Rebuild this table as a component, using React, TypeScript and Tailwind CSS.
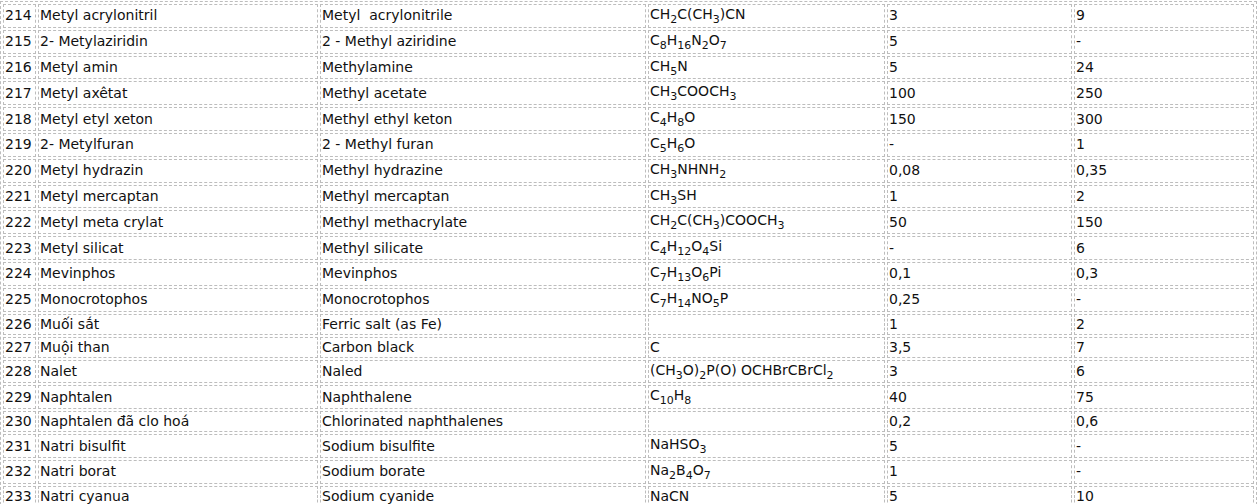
const rows: [string, string, string, string, string, string][] = [
  ['214', 'Metyl acrylonitril', 'Metyl\u00a0 acrylonitrile', 'CH2C(CH3)CN', '3', '9'],
  ['215', '2- Metylaziridin', '2 - Methyl aziridine', 'C8H16N2O7', '5', '-'],
  ['216', 'Metyl amin', 'Methylamine', 'CH5N', '5', '24'],
  ['217', 'Metyl axêtat', 'Methyl acetate', 'CH3COOCH3', '100', '250'],
  ['218', 'Metyl etyl xeton', 'Methyl ethyl keton', 'C4H8O', '150', '300'],
  ['219', '2- Metylfuran', '2 - Methyl furan', 'C5H6O', '-', '1'],
  ['220', 'Metyl hydrazin', 'Methyl hydrazine', 'CH3NHNH2', '0,08', '0,35'],
  ['221', 'Metyl mercaptan', 'Methyl mercaptan', 'CH3SH', '1', '2'],
  ['222', 'Metyl meta crylat', 'Methyl methacrylate', 'CH2C(CH3)COOCH3', '50', '150'],
  ['223', 'Metyl silicat', 'Methyl silicate', 'C4H12O4Si', '-', '6'],
  ['224', 'Mevinphos', 'Mevinphos', 'C7H13O6Pi', '0,1', '0,3'],
  ['225', 'Monocrotophos', 'Monocrotophos', 'C7H14NO5P', '0,25', '-'],
  ['226', 'Muối sắt', 'Ferric salt (as Fe)', '', '1', '2'],
  ['227', 'Muội than', 'Carbon black', 'C', '3,5', '7'],
  ['228', 'Nalet', 'Naled', '(CH3O)2P(O) OCHBrCBrCl2', '3', '6'],
  ['229', 'Naphtalen', 'Naphthalene', 'C10H8', '40', '75'],
  ['230', 'Naphtalen đã clo hoá', 'Chlorinated naphthalenes', '', '0,2', '0,6'],
  ['231', 'Natri bisulfit', 'Sodium bisulfite', 'NaHSO3', '5', '-'],
  ['232', 'Natri borat', 'Sodium borate', 'Na2B4O7', '1', '-'],
  ['233', 'Natri cyanua', 'Sodium cyanide', 'NaCN', '5', '10'],
];

// every digit in a formula is a subscript
function Formula({ text }: { text: string }) {
  if (!text) return <>&nbsp;</>;
  return (
    <>
      {text.split(/(\d+)/).map((part, i) =>
        /^\d+$/.test(part) ? (
          <span key={i} className="align-sub text-[11px] leading-[13px]">
            {part}
          </span>
        ) : (
          <span key={i}>{part}</span>
        )
      )}
    </>
  );
}

const cell = 'border border-dashed border-[#bdbdbd] px-[1px] py-[1px] align-middle';

export default function App() {
  return (
    <div className="bg-white pt-[1px] text-[#111] text-[14px] leading-[17px] font-['DejaVu_Sans',Verdana,sans-serif]">
      <table className="table-fixed w-[1257px] border border-dashed border-[#bdbdbd] border-separate border-spacing-[2px]">
        <colgroup>
          <col className="w-[33px]" />
          <col className="w-[280px]" />
          <col className="w-[326px]" />
          <col className="w-[237px]" />
          <col className="w-[185px]" />
          <col className="w-[180px]" />
        </colgroup>
        <tbody>
          {rows.map((r) => (
            <tr key={r[0]}>
              <td className={cell}>{r[0]}</td>
              <td className={cell}>{r[1]}</td>
              <td className={cell}>{r[2]}</td>
              <td className={cell}>
                <Formula text={r[3]} />
              </td>
              <td className={cell}>{r[4]}</td>
              <td className={cell}>{r[5]}</td>
            </tr>
          ))}
        </tbody>
      </table>
    </div>
  );
}
